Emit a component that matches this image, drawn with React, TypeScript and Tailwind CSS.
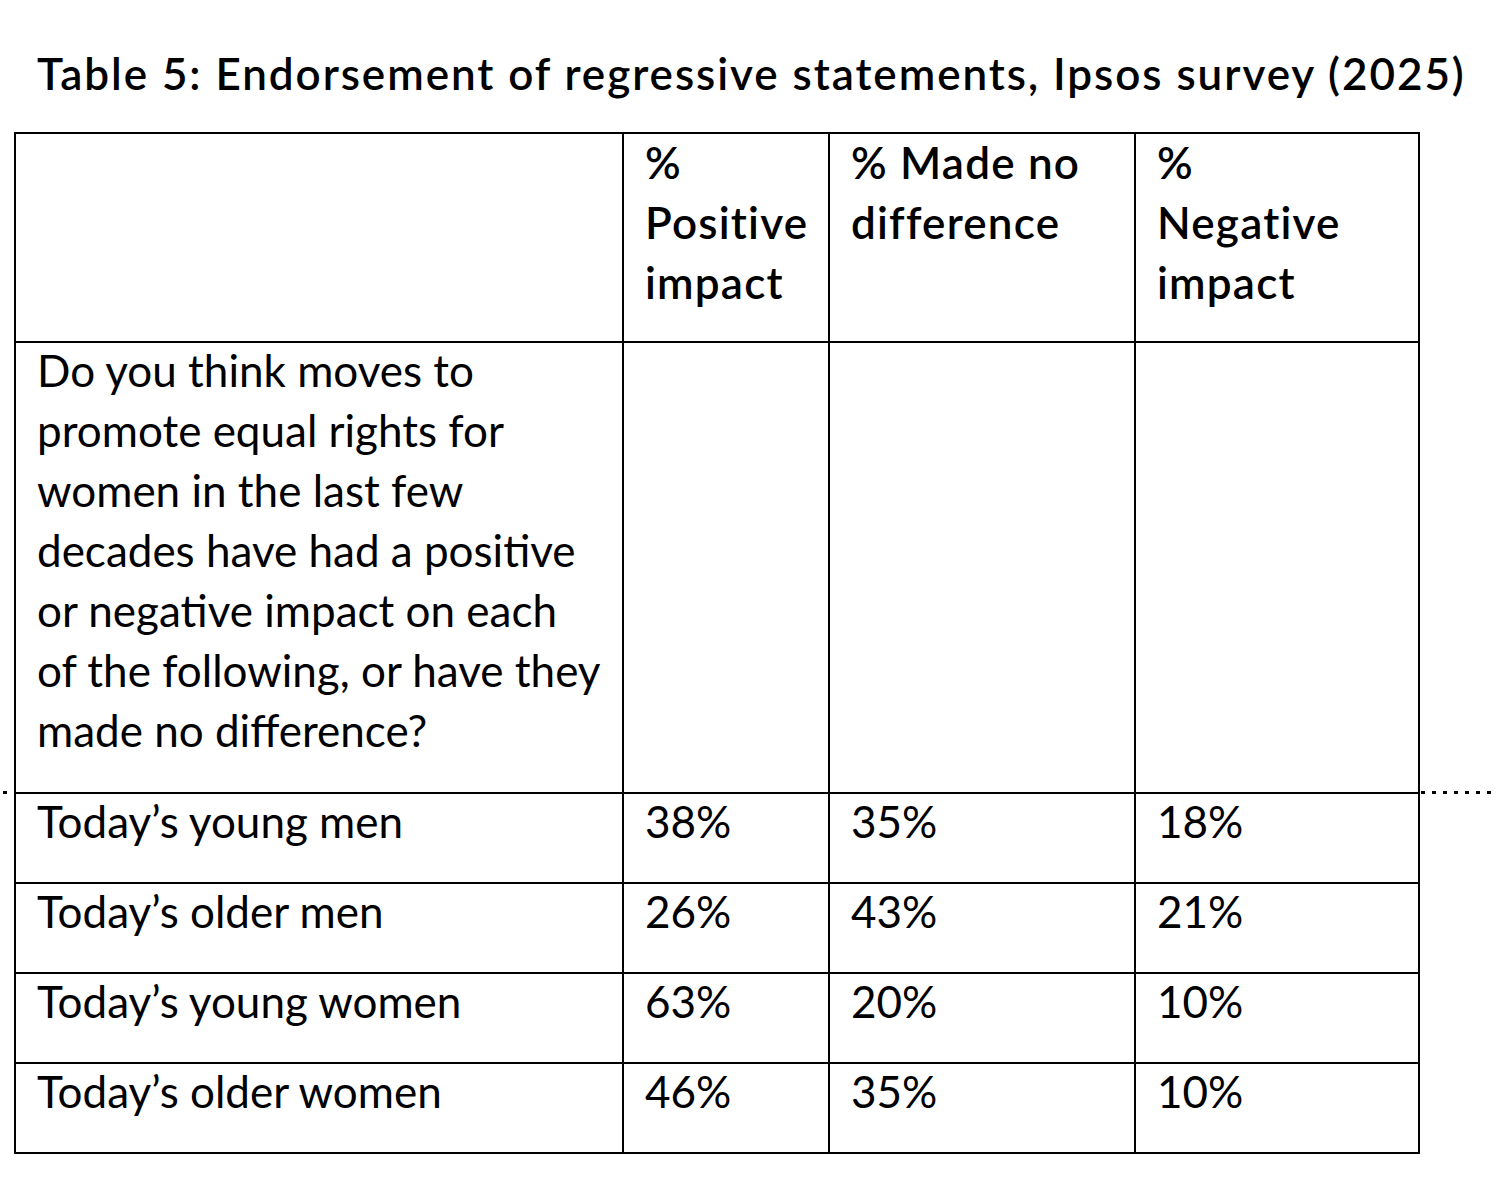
const rows = [
  { label: "Today’s young men", pos: "38%", none: "35%", neg: "18%" },
  { label: "Today’s older men", pos: "26%", none: "43%", neg: "21%" },
  { label: "Today’s young women", pos: "63%", none: "20%", neg: "10%" },
  { label: "Today’s older women", pos: "46%", none: "35%", neg: "10%" },
];

const cell = "border-2 border-black align-top px-[21px] pb-[29px]";
const head = `${cell} text-left font-semibold tracking-[1.2px]`;

function Cell({ children, className = cell }: { children?: React.ReactNode; className?: string }) {
  return (
    <td className={className}>
      <div className="-mt-[3px]">{children}</div>
    </td>
  );
}

export default function App() {
  return (
    <div className="min-h-screen bg-white text-black font-['Lato',sans-serif]">
      <h1 className="pl-[37px] pt-[43px] text-[44px] leading-[60px] font-semibold tracking-[1.95px]">
        Table 5: Endorsement of regressive statements, Ipsos survey (2025)
      </h1>

      <div className="relative mt-[29px] ml-[14px] w-[1404px]">
        <table className="w-[1404px] table-fixed border-collapse text-[44px] leading-[60px]">
          <colgroup>
            <col className="w-[608px]" />
            <col className="w-[206px]" />
            <col className="w-[306px]" />
            <col className="w-[284px]" />
          </colgroup>
          <thead>
            <tr className="h-[207px]">
              <th className={cell}></th>
              <th className={head}>
                <div className="-mt-[2px]">%<br />Positive<br />impact</div>
              </th>
              <th className={head}>
                <div className="-mt-[2px]">% Made no<br />difference</div>
              </th>
              <th className={head}>
                <div className="-mt-[2px]">%<br />Negative<br />impact</div>
              </th>
            </tr>
          </thead>
          <tbody>
            <tr className="h-[451px]">
              <Cell>
                Do you think moves to promote equal rights for women in the last few decades have had a positive or negative impact on each of the following, or have they made no difference?
              </Cell>
              <Cell />
              <Cell />
              <Cell />
            </tr>
            {rows.map((r) => (
              <tr key={r.label} className="h-[90px]">
                <Cell>{r.label}</Cell>
                <Cell>{r.pos}</Cell>
                <Cell>{r.none}</Cell>
                <Cell>{r.neg}</Cell>
              </tr>
            ))}
          </tbody>
        </table>

        {/* section-break dots either side of the table */}
        <div className="absolute left-[-11px] top-[659px] h-[3px] w-[4px] bg-black" />
        <div className="absolute left-[1407px] top-[659px] h-[3px] w-[76px] bg-[repeating-linear-gradient(90deg,#000_0_4px,transparent_4px_11px)]" />
      </div>
    </div>
  );
}
